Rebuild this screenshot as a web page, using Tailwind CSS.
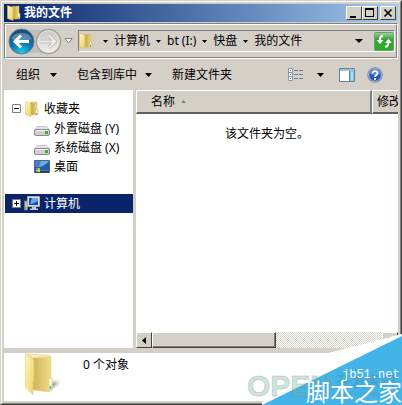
<!DOCTYPE html>
<html lang="zh-CN">
<head>
    <meta charset="UTF-8">
    <meta name="viewport" content="width=device-width, initial-scale=1.0">
    <title>我的文件</title>
    <script src="https://cdn.jsdelivr.net/npm/@tailwindcss/browser@4"></script>
</head>
<body class="h-screen overflow-hidden bg-[#d4d0c8] font-['Noto_Sans','Noto_Sans_CJK_SC',sans-serif] text-xs leading-4 text-black">
    <!-- shared icons -->
    <svg class="absolute size-0">
        <defs>
            <linearGradient id="gold" x1="0" x2="1" y1="0" y2="1">
                <stop offset="0" stop-color="#fff6bd"/>
                <stop offset="1" stop-color="#efd160"/>
            </linearGradient>
            <linearGradient id="goldBack" x1="0" x2="1">
                <stop offset="0" stop-color="#c2a24e"/>
                <stop offset="1" stop-color="#f5e08a"/>
            </linearGradient>
        </defs>
        <symbol id="folder" viewBox="0 0 14 16">
            <path d="M5 1.500 6.500 .5V13L4 14z" fill="#e5ca6c"/>
            <path d="M6 1.500 12 1V8l1 .5V13.500L12 14H6z" fill="url(#goldBack)" stroke="#d5b850" stroke-width=".5"/>
            <path d="M.5 .5 6 2.500V15.500L.5 13.500z" fill="url(#gold)" stroke="#dcbf55" stroke-width=".5"/>
            <path d="M11.500 9v4" stroke="#fff"/>
            <path d="M11.500 12v1.500" stroke="#3f9be8"/>
        </symbol>
        <symbol id="drive" viewBox="0 0 16 10">
            <path d="M3.500 .5h9L15.500 4H.5z" fill="#e4e4e4" stroke="#b5b5b5" stroke-width=".7"/>
            <rect x=".5" y="3.500" width="15" height="6" rx="1.500" fill="#d0d0d0" stroke="#8b8b8b"/>
            <path d="M2 4.500h12" stroke="#f3f3f3"/>
            <rect x="11" y="5" width="3" height="3" fill="#35b51c"/>
        </symbol>
    </svg>

    <div class="flex h-full flex-col border border-t-[#d4d0c8] border-r-[#404040] border-b-[#404040] border-l-[#d4d0c8]">
        <div class="flex min-h-0 flex-1 flex-col border border-t-white border-r-[#808080] border-b-[#808080] border-l-white p-0.5">

            <header class="flex h-[18px] shrink-0 items-center bg-linear-to-r from-[#0a246a] to-[#a6caf0] pr-0.5 pl-[3px] text-white">
                <svg class="h-4 w-3.5"><use href="#folder"/></svg>
                <h1 class="ml-[3px] flex-1 font-bold">我的文件</h1>
                <button aria-label="最小化" class="h-3.5 w-4 border border-t-white border-r-[#404040] border-b-[#404040] border-l-white bg-[#d4d0c8]">
                    <svg viewBox="0 0 14 12" class="h-3 w-3.5"><path d="M3 9h6v2H3z"/></svg>
                </button>
                <button aria-label="最大化" class="h-3.5 w-4 border border-t-white border-r-[#404040] border-b-[#404040] border-l-white bg-[#d4d0c8]">
                    <svg viewBox="0 0 14 12" class="h-3 w-3.5"><path d="M2 1h9v9H2zM3 3v6h7V3z" fill-rule="evenodd"/></svg>
                </button>
                <button aria-label="关闭" class="ml-0.5 h-3.5 w-4 border border-t-white border-r-[#404040] border-b-[#404040] border-l-white bg-[#d4d0c8]">
                    <svg viewBox="0 0 14 12" class="h-3 w-3.5"><path d="M3.500 2.500l7 7m0-7l-7 7" stroke="#000" stroke-width="1.600"/></svg>
                </button>
            </header>

            <!-- navigation -->
            <nav class="mt-px flex h-[36px] shrink-0 items-center border border-t-[#808080] border-r-white border-b-white border-l-[#808080]">
                <div class="flex h-full flex-1 items-center border-t border-r border-b border-l border-t-white border-r-[#808080] border-b-[#808080] border-l-white">
                    <div class="relative ml-0.5 flex h-[27px] w-[54px] shrink-0">
                        <svg viewBox="0 0 54 27" class="absolute inset-0 h-[27px] w-[54px]">
                            <defs>
                                <radialGradient id="blue" cx=".5" cy=".95" r=".8">
                                    <stop offset="0" stop-color="#18d2f8"/>
                                    <stop offset=".5" stop-color="#127cb4"/>
                                    <stop offset="1" stop-color="#164e7c"/>
                                </radialGradient>
                                <linearGradient id="silver" x2="0" y2="1">
                                    <stop offset="0" stop-color="#c9c8c5"/>
                                    <stop offset=".5" stop-color="#dddcd8"/>
                                    <stop offset="1" stop-color="#f1f0ee"/>
                                </linearGradient>
                            </defs>
                            <path d="M13 1h28v25H13c5-6 5-19 0-25z" fill="#c2c0bc"/>
                            <path d="M13 1q14 4 28 0M13 26q14-4 28 0" fill="#d4d0c8" stroke="#aaa9a5" stroke-width=".6"/>
                            <circle cx="13.500" cy="13.500" r="12.500" fill="url(#blue)" stroke="#6a7c8b"/>
                            <path d="M3 11a11 9 0 0 1 21 0q-10 4-21 0z" fill="#fff" opacity=".28"/>
                            <path d="M13 7.500 7 13.500l6 6M7.500 13.500H21" fill="none" stroke="#fff" stroke-width="3"/>
                            <circle cx="40.500" cy="13.500" r="12" fill="url(#silver)" stroke="#a2a19e" stroke-width="1.500"/>
                            <circle cx="40.500" cy="13.500" r="10.800" fill="none" stroke="#e9e8e5" stroke-width=".7"/>
                            <path d="M41 7.500l6 6-6 6M46.500 13.500H33" fill="none" stroke="#b5b4b0" stroke-width="3.500"/>
                            <path d="M41 7.500l6 6-6 6M46.500 13.500H33" fill="none" stroke="#efeeeb" stroke-width="2"/>
                        </svg>
                        <button aria-label="后退" class="z-10 flex-1 rounded-full"></button>
                        <button aria-label="前进" class="z-10 flex-1 rounded-full"></button>
                    </div>
                    <button aria-label="最近的页面" class="ml-0.5 shrink-0">
                        <svg viewBox="0 0 9 6" class="h-1.5 w-[9px]"><path d="M.8 .5h7.400L4.500 5z" fill="#f4f3f0" stroke="#858585"/></svg>
                    </button>
                    <div class="mr-px ml-[5px] flex h-[22px] min-w-0 flex-1 items-center border border-t-[#808080] border-r-white border-b-white border-l-[#808080] whitespace-nowrap">
                        <svg class="h-4 w-3.5 shrink-0"><use href="#folder"/></svg>
                        <svg viewBox="0 0 5 3" class="mr-1.5 ml-2.5 h-[3px] w-[5px] shrink-0"><path d="M0 0h5L2.500 3z"/></svg>
                        <a href="#">计算机</a>
                        <svg viewBox="0 0 5 3" class="mr-1.5 ml-1.5 h-[3px] w-[5px] shrink-0"><path d="M0 0h5L2.500 3z"/></svg>
                        <a href="#">bt (I:)</a>
                        <svg viewBox="0 0 5 3" class="mr-1.5 ml-1.5 h-[3px] w-[5px] shrink-0"><path d="M0 0h5L2.500 3z"/></svg>
                        <a href="#">快盘</a>
                        <svg viewBox="0 0 5 3" class="mr-1.5 ml-1.5 h-[3px] w-[5px] shrink-0"><path d="M0 0h5L2.500 3z"/></svg>
                        <a href="#">我的文件</a>
                        <button aria-label="以前的位置" class="mr-[11px] ml-auto">
                            <svg viewBox="0 0 8 4" class="h-1 w-2"><path d="M0 0h8L4 4z"/></svg>
                        </button>
                        <button aria-label="刷新">
                            <svg viewBox="0 0 20 19" class="h-[19px] w-5">
                                <defs>
                                    <linearGradient id="green" x2="0" y2="1">
                                        <stop offset="0" stop-color="#9ed69b"/>
                                        <stop offset=".4" stop-color="#35a035"/>
                                        <stop offset="1" stop-color="#28b022"/>
                                    </linearGradient>
                                </defs>
                                <rect x=".5" y=".5" width="19" height="18" rx="1" fill="url(#green)" stroke="#6f9f6b"/>
                                <path d="M9 4Q6 4 6 8M11 15q3.500-.5 3.500-5" fill="none" stroke="#fff" stroke-width="2"/>
                                <path d="M2.500 8h7L6 12zM11 11h7L14.500 7z" fill="#fff"/>
                            </svg>
                        </button>
                    </div>
                </div>
            </nav>

            <!-- toolbar -->
            <div class="flex h-[31px] shrink-0 items-center pr-[15px] pl-3 whitespace-nowrap">
                <button class="flex items-center gap-2.5">组织
                    <svg viewBox="0 0 7 4" class="h-1 w-[7px]"><path d="M0 0h7L3.500 4z"/></svg>
                </button>
                <button class="ml-5 flex items-center gap-2">包含到库中
                    <svg viewBox="0 0 7 4" class="h-1 w-[7px]"><path d="M0 0h7L3.500 4z"/></svg>
                </button>
                <button class="ml-5 mr-auto">新建文件夹</button>
                <button aria-label="更改您的视图" class="flex items-center gap-3.5">
                    <svg viewBox="0 0 15 13" class="h-[13px] w-[15px]">
                        <path d="M.5 .5h4v12h-4zM.5 4.500h4M.5 8.500h4" fill="#fff" stroke="#8398ad"/>
                        <path d="M2 2h1v1H2z" fill="#386faa"/><path d="M2 6h1v1H2z" fill="#d03b20"/><path d="M2 10h1v1H2z" fill="#386faa"/>
                        <path d="M6 2.500h4m1 0h4M6 6.500h4m1 0h4M6 10.500h4m1 0h4" stroke="#6d7f92"/>
                    </svg>
                    <svg viewBox="0 0 7 4" class="h-1 w-[7px]"><path d="M0 0h7L3.500 4z"/></svg>
                </button>
                <button aria-label="显示预览窗格" class="ml-[15px]">
                    <svg viewBox="0 0 16 14" class="h-3.5 w-4">
                        <path d="M.5 .5h15v13H.5z" fill="#fff" stroke="#64819d"/>
                        <path d="M1 1h14v2H1z" fill="#a5bfd3"/>
                        <path d="M10 3h5v10h-5z" fill="#83cbe7"/>
                        <path d="M10.500 3v10" stroke="#4e87aa"/>
                        <path d="M13 4v8" stroke="#c9eff9"/>
                    </svg>
                </button>
                <button aria-label="获取帮助" class="ml-3">
                    <svg viewBox="0 0 16 16" class="size-4">
                        <circle cx="8" cy="8" r="7.200" fill="#2756bd" stroke="#8b9099" stroke-width="1.200"/>
                        <circle cx="8" cy="8" r="6.300" fill="none" stroke="#d9e3f4" stroke-width=".7"/>
                        <path d="M3 7a5 5 0 0 1 10 0q-5 2-10 0z" fill="#7ba2e5" opacity=".6"/>
                        <path d="M5.500 6.500C5.500 3 10.800 3.500 10.500 6.300 10.300 8 8 8 8 10" fill="none" stroke="#fff" stroke-width="1.800"/>
                        <circle cx="8" cy="12" r="1.100" fill="#fff"/>
                    </svg>
                </button>
            </div>

            <!-- panes -->
            <div class="flex min-h-0 flex-1 gap-[3px]">
                <aside class="w-[129px] shrink-0 bg-white pt-2 pl-px whitespace-nowrap">
                    <ul>
                        <li>
                            <div class="flex h-[21px] items-center pl-[7px]">
                                <button aria-label="折叠">
                                    <svg viewBox="0 0 9 9" class="size-[9px]"><path d="M.5 .5h8v8h-8z" fill="#fff" stroke="#808080"/><path d="M2 4h5v1H2z"/></svg>
                                </button>
                                <svg class="mr-[5px] ml-1 h-4 w-3.5"><use href="#folder"/></svg>
                                <a href="#">收藏夹</a>
                            </div>
                            <ul class="pl-[29px]">
                                <li class="flex h-[19px] items-center gap-1"><svg class="mt-1 h-2.5 w-4"><use href="#drive"/></svg><a href="#">外置磁盘 (Y)</a></li>
                                <li class="flex h-[19px] items-center gap-1"><svg class="mt-1 h-2.5 w-4"><use href="#drive"/></svg><a href="#">系统磁盘 (X)</a></li>
                                <li class="flex h-[19px] items-center gap-1">
                                    <svg viewBox="0 0 16 13" class="h-[13px] w-4">
                                        <path d="M.5 .5h15v12H.5z" fill="#3d83cd" stroke="#4c6683"/>
                                        <path d="M1 7Q7 9 15 1v9H1z" fill="#245ba7"/>
                                        <path d="M7 1h8Q11 6 5 7z" fill="#6eabdf"/>
                                        <path d="M1 11h14v1.500H1z" fill="#1f334c"/>
                                        <path d="M2 8h2v2H2z" fill="#ef713c"/><path d="M4 8h2v2H4z" fill="#8bd04a"/><path d="M2 10h2v2H2z" fill="#4fbff5"/><path d="M4 10h2v2H4z" fill="#f4d248"/>
                                    </svg>
                                    <a href="#">桌面</a>
                                </li>
                            </ul>
                        </li>
                        <li class="mt-[18px] flex h-[19px] items-center bg-[#0a246a] pl-[7px] text-white">
                            <button aria-label="展开">
                                <svg viewBox="0 0 9 9" class="size-[9px]"><path d="M.5 .5h8v8h-8z" fill="#fff" stroke="#808080"/><path d="M2 4h2V2h1v2h2v1H5v2H4V5H2z"/></svg>
                            </button>
                            <svg viewBox="0 0 16 15" class="mr-1 ml-[3px] h-[15px] w-4">
                                <path d="M.5 5h3v9h-3z" fill="#b9bdc3" stroke="#777"/>
                                <path d="M1 11h1v2H1z" fill="#37d42a"/>
                                <path d="M3.500 .5h12v10h-12z" fill="#dedfdf" stroke="#a8adb5"/>
                                <path d="M5 2h9v7H5z" fill="#1747b5"/>
                                <path d="M8 2h6v3Q10 8 6 8z" fill="#6aa4ec"/>
                                <path d="M8 11h4v1.500h2V14H6v-1.500h2z" fill="#c7c9cc"/>
                            </svg>
                            <a href="#">计算机</a>
                        </li>
                    </ul>
                </aside>

                <main class="flex min-w-0 flex-1 flex-col bg-white">
                    <table class="w-full table-fixed border-separate border-spacing-0 whitespace-nowrap">
                        <thead>
                            <tr class="h-6 bg-[#d4d0c8] text-left">
                                <th class="border-t border-r-2 border-b-2 border-l border-t-white border-r-[#808080] border-b-[#606060] border-l-white pl-3.5 font-normal">
                                    <span class="flex items-center gap-1.5">名称
                                        <svg viewBox="0 0 5 3" class="h-[3px] w-[5px]"><path d="M0 3h5L2.500 0z" fill="#808080"/></svg>
                                    </span>
                                </th>
                                <th class="w-[26px] overflow-hidden border-t border-b-2 border-l border-t-white border-b-[#606060] border-l-white pl-1 font-normal">修改</th>
                            </tr>
                        </thead>
                        <tbody>
                            <tr><td colspan="2" class="pt-3 text-center">该文件夹为空。</td></tr>
                        </tbody>
                    </table>
                    <div class="mt-auto flex h-4 bg-[repeating-conic-gradient(#ffffff_0_25%,#d4d0c8_0_50%)] bg-size-[2px_2px]">
                        <button aria-label="向左滚动" class="flex w-4 items-center justify-center border border-t-white border-r-[#404040] border-b-[#404040] border-l-white bg-[#d4d0c8]">
                            <svg viewBox="0 0 4 7" class="h-[7px] w-1"><path d="M4 0v7L0 3.500z"/></svg>
                        </button>
                        <div class="w-[124px] border border-t-white border-r-[#404040] border-b-[#404040] border-l-white bg-[#d4d0c8] shadow-[inset_-1px_-1px_#808080]"></div>
                        <button aria-label="向右滚动" class="ml-auto flex w-4 items-center justify-center border border-t-white border-r-[#404040] border-b-[#404040] border-l-white bg-[#d4d0c8]">
                            <svg viewBox="0 0 4 7" class="h-[7px] w-1"><path d="M0 0v7l4-3.500z"/></svg>
                        </button>
                    </div>
                </main>
            </div>

            <!-- details -->
            <footer class="mt-[5px] flex h-12 shrink-0 bg-white pl-5">
                <svg viewBox="0 0 40 44" class="h-11 w-10">
                    <defs>
                        <radialGradient id="shade"><stop offset="0" stop-color="#777"/><stop offset="1" stop-color="#fff" stop-opacity="0"/></radialGradient>
                    </defs>
                    <ellipse cx="28" cy="32" rx="12" ry="6" fill="url(#shade)" transform="rotate(-25 28 32)"/>
                    <path d="M2 1 25 2.500q2 0 2 2V24l1.500 2v11L25 39l-16-2z" fill="url(#goldBack)" stroke="#e6cf72" stroke-width=".5"/>
                    <path d="M2 1 25 3v1L8 5z" fill="#f8edb0"/>
                    <path d="M1.500 .5 8 5q2 1.500 2 4v19l-1 1v13L1.500 34z" fill="url(#gold)" stroke="#e3cb69" stroke-width=".6"/>
                    <path d="M26.500 26v10" stroke="#fff" stroke-width="2"/>
                    <path d="M26.500 33v3" stroke="#5aa8ec" stroke-width="2"/>
                </svg>
                <p class="mt-1 ml-[19px]">0 个对象</p>
            </footer>
        </div>
    </div>

    <!-- site mark lying over the corner of the window -->
    <svg viewBox="0 0 162 75" class="pointer-events-none absolute right-0 bottom-0 h-[75px] w-[162px]">
        <path d="M36 32 88 23 162 4v71H22v-3L36 66z" fill="#fff"/>
        <path d="M22 75 162 6v69z" fill="#42b4e8"/>
        <text x="7" y="66" font-size="30" font-weight="700" font-family="Liberation Sans" fill="#6db79a" fill-opacity=".35" stroke="#888" stroke-opacity=".3">OPEN</text>
        <text x="96" y="57" font-size="15" font-weight="700" font-family="Noto Sans CJK SC" fill="#508fa9" fill-opacity=".45">开发家园</text>
        <text x="96" y="66" font-size="8" font-family="Liberation Sans" fill="#508fa9" fill-opacity=".5">www.openjq.com</text>
        <text x="102" y="48" font-size="12" font-family="Liberation Mono" fill="#fff">jb51.net</text>
        <text x="66" y="71" font-size="24" font-family="Noto Sans CJK SC" fill="#fff">脚本之家</text>
    </svg>
</body>
</html>
